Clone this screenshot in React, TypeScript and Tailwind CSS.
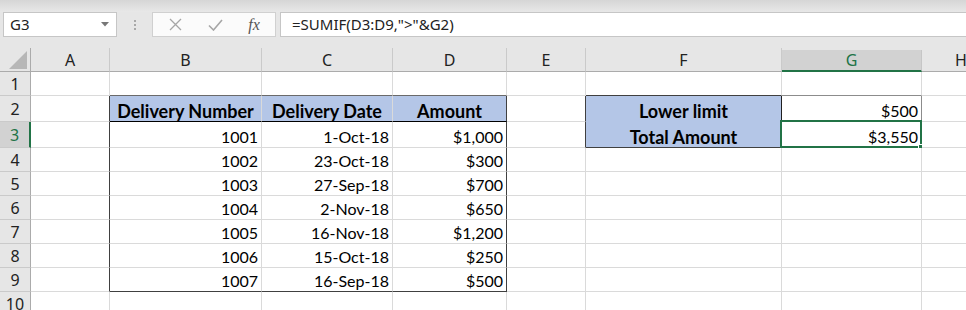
import React from "react";

type CellDef = { text?: string; bold?: boolean; align?: "left" | "center" | "right"; blue?: boolean };

const data: Record<number, Record<string, CellDef>> = {
  2: {
    B: { text: "Delivery Number", bold: true, align: "center", blue: true },
    C: { text: "Delivery Date", bold: true, align: "center", blue: true },
    D: { text: "Amount", bold: true, align: "center", blue: true },
    F: { text: "Lower limit", bold: true, align: "center", blue: true },
    G: { text: "$500", align: "right" },
  },
  3: {
    B: { text: "1001", align: "right" },
    C: { text: "1-Oct-18", align: "right" },
    D: { text: "$1,000", align: "right" },
    F: { text: "Total Amount", bold: true, align: "center", blue: true },
    G: { text: "$3,550", align: "right" },
  },
  4: { B: { text: "1002", align: "right" }, C: { text: "23-Oct-18", align: "right" }, D: { text: "$300", align: "right" } },
  5: { B: { text: "1003", align: "right" }, C: { text: "27-Sep-18", align: "right" }, D: { text: "$700", align: "right" } },
  6: { B: { text: "1004", align: "right" }, C: { text: "2-Nov-18", align: "right" }, D: { text: "$650", align: "right" } },
  7: { B: { text: "1005", align: "right" }, C: { text: "16-Nov-18", align: "right" }, D: { text: "$1,200", align: "right" } },
  8: { B: { text: "1006", align: "right" }, C: { text: "15-Oct-18", align: "right" }, D: { text: "$250", align: "right" } },
  9: { B: { text: "1007", align: "right" }, C: { text: "16-Sep-18", align: "right" }, D: { text: "$500", align: "right" } },
};

const cols = ["A", "B", "C", "D", "E", "F", "G", "H"];
const rows = [1, 2, 3, 4, 5, 6, 7, 8, 9, 10];

function rightClass(r: number, c: string): string {
  if (c === "A" && r >= 2 && r <= 9) return "border-r-[#404040]";
  if (c === "D" && r >= 2 && r <= 9) return "border-r-[#404040]";
  if (c === "E" && (r === 2 || r === 3)) return "border-r-[#404040]";
  if (c === "F" && (r === 2 || r === 3)) return "border-r-[#202020]";
  if (c === "G" && r === 2) return "border-r-[#8c8c8c]";
  return "border-r-[#dadada]";
}

function bottomClass(r: number, c: string): string {
  if (r === 1 && (c === "B" || c === "C" || c === "D")) return "border-b-[#6a6a6a]";
  if (r === 2 && (c === "B" || c === "C" || c === "D")) return "border-b-black";
  if (r === 9 && (c === "B" || c === "C" || c === "D")) return "border-b-[#404040]";
  if (r === 1 && c === "F") return "border-b-[#404040]";
  if (r === 2 && c === "F") return "border-b-[#b4c6e7]";
  if (r === 3 && c === "F") return "border-b-[#404040]";
  if (r === 1 && c === "G") return "border-b-[#8c8c8c]";
  return "border-b-[#dadada]";
}

function Cell({ r, c }: { r: number; c: string }) {
  const d = data[r]?.[c];
  const align =
    d?.align === "center" ? "justify-center" : d?.align === "right" ? "justify-end pr-[3px]" : "justify-start pl-[3px]";
  const bg = d?.blue ? "bg-[#b4c6e7]" : "bg-white";
  const weight = d?.bold ? "font-bold text-[18px]" : "font-normal text-[16px]";
  const selected = r === 3 && c === "G";
  return (
    <div
      className={[
        "relative flex items-end border-r border-b overflow-visible whitespace-nowrap leading-[20px] text-black",
        rightClass(r, c),
        bottomClass(r, c),
        align,
        bg,
        weight,
      ].join(" ")}
      style={{ fontFamily: 'Lato, "Liberation Sans", sans-serif' }}
    >
      {d?.text ?? ""}
      {selected && (
        <>
          <div className="absolute -left-[2px] -top-[2px] -right-[1px] -bottom-[1px] border-2 border-[#217346] pointer-events-none" />
          <div className="absolute -right-[4px] -bottom-[4px] w-[7px] h-[7px] bg-[#217346] border border-white" />
        </>
      )}
    </div>
  );
}

export default function App() {
  const ui = { fontFamily: '"Noto Sans", "Open Sans", sans-serif' };
  return (
    <div className="w-[966px] h-[310px] overflow-hidden bg-[#e6e6e6] flex flex-col" style={ui}>
      {/* top band */}
      <div className="h-[12px] shrink-0 bg-gradient-to-b from-[#d6d6d6] to-[#e8e8e8]" />
      {/* formula bar */}
      <div className="h-[25px] shrink-0 flex items-stretch">
        <div className="ml-[3px] w-[114px] bg-white border border-[#c6c6c6] flex items-center justify-between pl-[6px] pr-[7px]">
          <span className="text-[15px] text-[#222]">G3</span>
          <svg width="8" height="5" viewBox="0 0 8 5">
            <polygon points="0,0 8,0 4,4.5" fill="#777" />
          </svg>
        </div>
        <div className="w-[35px] flex flex-col items-center justify-center gap-[2px]">
          <div className="w-[2px] h-[2px] bg-[#a8a8a8]" />
          <div className="w-[2px] h-[2px] bg-[#a8a8a8]" />
          <div className="w-[2px] h-[2px] bg-[#a8a8a8]" />
        </div>
        <div className="w-[124px] bg-[#fbfbfb] border border-[#d0d0d0] flex items-center">
          <div className="w-[40px] flex justify-center ml-[2px]">
            <svg width="13" height="13" viewBox="0 0 13 13">
              <path d="M1 1 L12 12 M12 1 L1 12" stroke="#a6a6a6" strokeWidth="1.3" fill="none" />
            </svg>
          </div>
          <div className="w-[40px] flex justify-center">
            <svg width="15" height="12" viewBox="0 0 15 12">
              <path d="M1 6.5 L5.5 11 L14 1" stroke="#a6a6a6" strokeWidth="1.6" fill="none" />
            </svg>
          </div>
          <div className="w-[38px] flex justify-center">
            <span className="italic text-[16px] text-[#555]" style={{ fontFamily: '"Liberation Serif", serif' }}>
              fx
            </span>
          </div>
        </div>
        <div className="ml-[4px] flex-1 bg-white border-y border-l border-[#c6c6c6] flex items-center pl-[11px]">
          <span className="text-[15px] text-[#222]">=SUMIF(D3:D9,"&gt;"&amp;G2)</span>
        </div>
      </div>
      <div className="h-[11px] shrink-0" />
      {/* sheet */}
      <div className="shrink-0 w-[1001px] grid grid-cols-[31px_79px_152px_131px_114px_79px_196px_140px_79px] grid-rows-[24px_24px_26px_26px_24px_24px_24px_24px_24px_24px_24px]">
        {/* corner */}
        <div className="bg-[#e6e6e6] border-r border-b border-r-[#ababab] border-b-[#ababab] flex items-end justify-end pr-[3px] pb-[2px]">
          <svg width="18" height="18" viewBox="0 0 18 18">
            <polygon points="18,0 18,18 0,18" fill="#b7b7b7" />
          </svg>
        </div>
        {cols.map((c) =>
          c === "G" ? (
            <div
              key={c}
              className="bg-[#d2d2d2] border-r border-r-[#c6c6c6] border-b-2 border-b-[#217346] flex items-center justify-center text-[16px] text-[#217346] mt-[2px]"
            >
              {c}
            </div>
          ) : (
            <div
              key={c}
              className="bg-[#e6e6e6] border-r border-b border-r-[#cacaca] border-b-[#ababab] flex items-center justify-center text-[16px] text-[#222]"
            >
              {c}
            </div>
          )
        )}
        {rows.map((r) => (
          <React.Fragment key={r}>
            {r === 3 ? (
              <div className="bg-[#d2d2d2] border-r-2 border-b border-r-[#217346] border-b-[#cacaca] flex items-center justify-center text-[16px] text-[#217346]">
                {r}
              </div>
            ) : (
              <div className="bg-[#e6e6e6] border-r border-b border-r-[#ababab] border-b-[#cacaca] flex items-center justify-center text-[16px] text-[#222]">
                {r}
              </div>
            )}
            {cols.map((c) => (
              <Cell key={c} r={r} c={c} />
            ))}
          </React.Fragment>
        ))}
      </div>
    </div>
  );
}
